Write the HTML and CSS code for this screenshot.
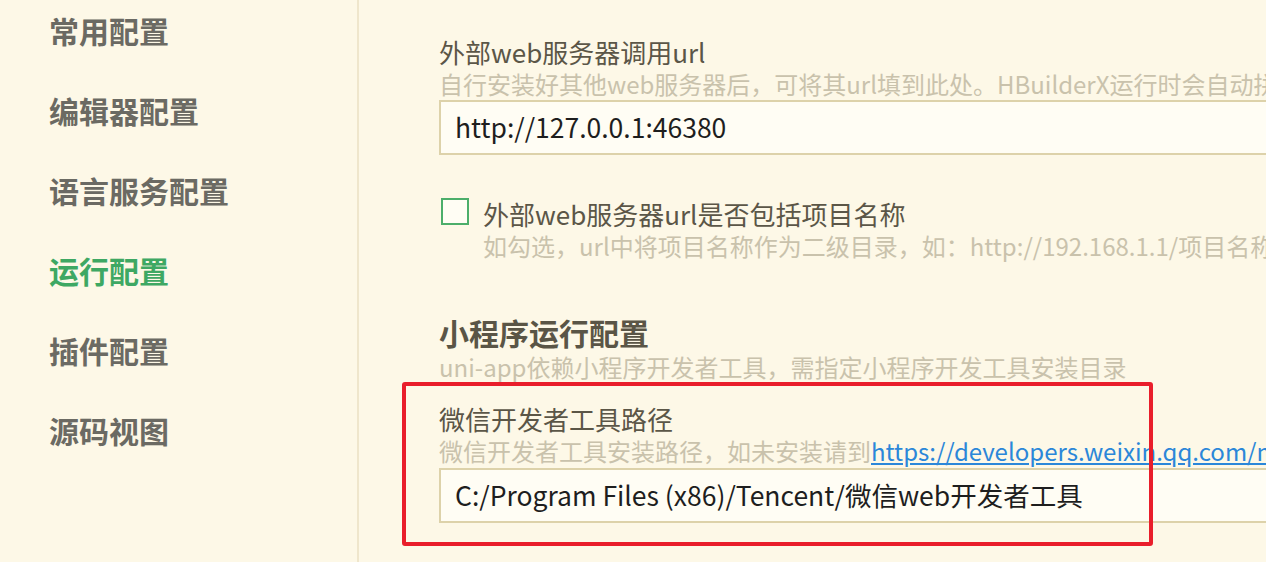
FILE: index.html
```html
<!DOCTYPE html>
<html lang="zh-CN">
<head>
<meta charset="utf-8">
<title>运行配置</title>
<link rel="stylesheet" href="styles.css">
</head>
<body>
<div class="app">
  <nav class="sidebar">
    <div class="nav-item">常用配置</div>
    <div class="nav-item">编辑器配置</div>
    <div class="nav-item">语言服务配置</div>
    <div class="nav-item active">运行配置</div>
    <div class="nav-item">插件配置</div>
    <div class="nav-item">源码视图</div>
  </nav>
  <main class="content">
    <section class="field field-first">
      <div class="label">外部web服务器调用url</div>
      <div class="desc">自行安装好其他web服务器后，可将其url填到此处。HBuilderX运行时会自动拼接项目名称</div>
      <div class="input">http://127.0.0.1:46380</div>
    </section>
    <section class="check-row">
      <span class="checkbox"></span>
      <div class="check-text">
        <div class="label">外部web服务器url是否包括项目名称</div>
        <div class="desc">如勾选，url中将项目名称作为二级目录，如：http://192.168.1.1/项目名称/index.html</div>
      </div>
    </section>
    <section class="group">
      <h2 class="group-title">小程序运行配置</h2>
      <div class="desc">uni-app依赖小程序开发者工具，需指定小程序开发工具安装目录</div>
    </section>
    <section class="field field-wx">
      <div class="label">微信开发者工具路径</div>
      <div class="desc">微信开发者工具安装路径，如未安装请到<a class="link" href="#">https://developers.weixin.qq.com/miniprogram/dev/devtools/download.html</a>下载</div>
      <div class="input">C:/Program Files (x86)/Tencent/微信web开发者工具</div>
      <div class="highlight"></div>
    </section>
  </main>
</div>
</body>
</html>
```
FILE: styles.css
```css
* { box-sizing: border-box; }
html, body {
  margin: 0;
  padding: 0;
  width: 1266px;
  height: 562px;
  overflow: hidden;
  background: #fdf8e7;
}
body {
  font-family: "Noto Sans CJK SC", "Noto Sans", sans-serif;
  color: #5b5647;
}
.app {
  display: flex;
  height: 562px;
}
.sidebar {
  flex: 0 0 359px;
  border-right: 2px solid #efe6cc;
  padding: 8px 0 0 49px;
  display: flex;
  flex-direction: column;
}
.nav-item {
  font-size: 30px;
  font-weight: 700;
  line-height: 44px;
  height: 80px;
  color: #6b6a63;
  white-space: nowrap;
}
.nav-item.active { color: #3ea863; }
.content {
  flex: 1 1 auto;
  min-width: 0;
  padding: 35px 0 0 80px;
  display: flex;
  flex-direction: column;
  white-space: nowrap;
}
.label {
  font-size: 26px;
  line-height: 34px;
  color: #5b5647;
}
.desc {
  font-size: 24px;
  line-height: 30px;
  color: #c9c2ac;
}
.link {
  color: #2b87d9;
  text-decoration: underline;
}
.input {
  width: 1100px;
  height: 55px;
  border: 2px solid #ddd2aa;
  background: #fffdf4;
  padding-left: 14px;
  font-size: 26.5px;
  line-height: 50px;
  color: #1e1e1e;
}
.field { position: relative; }
.field-first .input { margin-top: 1px; }
.field-wx .input { margin-top: 1.5px; }
.check-row {
  display: flex;
  align-items: flex-start;
  margin-top: 42px;
}
.checkbox {
  flex: 0 0 28px;
  width: 28px;
  height: 27px;
  margin: 1px 14px 0 2px;
  border: 2px solid #4cae6a;
  background: #fffdf4;
}
.group { margin-top: 51px; }
.group-title {
  margin: 0;
  font-size: 30px;
  font-weight: 700;
  line-height: 40px;
  color: #5a5546;
}
.field-wx { margin-top: 20px; }
.highlight {
  position: absolute;
  left: -37px;
  top: -20px;
  width: 751px;
  height: 164px;
  border: 4px solid #e91e2b;
  border-radius: 3px;
  pointer-events: none;
}
```
